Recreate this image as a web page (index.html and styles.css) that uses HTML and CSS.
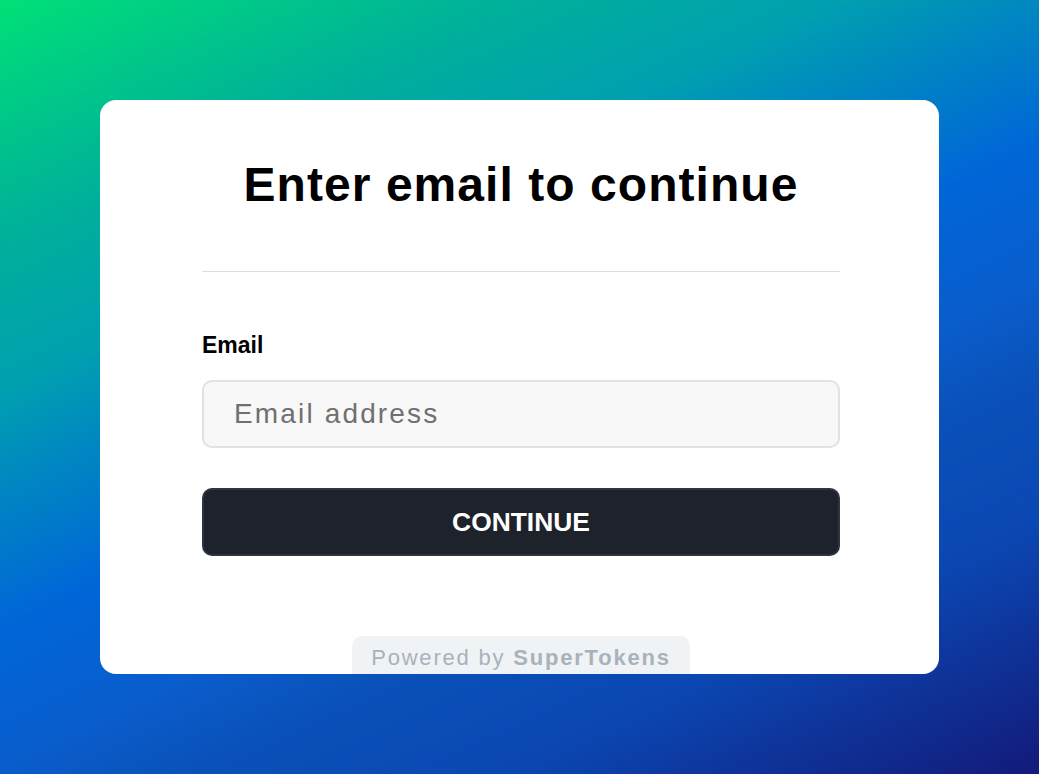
FILE: index.html
```html
<!DOCTYPE html>
<html lang="en">
<head>
<meta charset="utf-8">
<title>Enter email to continue</title>
<link rel="stylesheet" href="styles.css">
</head>
<body>
<div class="page">
  <div class="card">
    <h1 class="title">Enter email to continue</h1>
    <div class="divider"></div>
    <form class="form">
      <label class="label" for="email">Email</label>
      <input class="input" id="email" type="email" placeholder="Email address">
      <button class="button" type="button">CONTINUE</button>
    </form>
    <div class="powered">Powered by <b>SuperTokens</b></div>
  </div>
</div>
</body>
</html>
```

FILE: styles.css
```css
* { box-sizing: border-box; }
html, body { margin: 0; padding: 0; }
body {
  width: 1039px;
  height: 774px;
  overflow: hidden;
  font-family: "Liberation Sans", Arial, sans-serif;
  background: linear-gradient(155deg, #00e077 0%, #00b09a 19%, #00a0b0 31%, #0088c0 38.5%, #0066d8 50%, #0a5dcc 61%, #0a50b8 69%, #0b47b2 80%, #131a7a 100%);
}
.page {
  padding-top: 100px;
  display: flex;
  justify-content: center;
}
.card {
  width: 839px;
  height: 574px;
  background: #ffffff;
  border-radius: 16px;
  overflow: hidden;
  padding: 55px 99px 0 102px;
  display: flex;
  flex-direction: column;
  align-items: stretch;
}
.card > * { flex-shrink: 0; }
.title {
  margin: 0;
  font-size: 48px;
  line-height: 60px;
  font-weight: 700;
  letter-spacing: 1.05px;
  text-align: center;
  color: #000000;
}
.divider {
  margin-top: 56px;
  height: 1px;
  background: #dddddd;
}
.form {
  display: flex;
  flex-direction: column;
  margin-top: 59px;
}
.form > * { flex-shrink: 0; }
.label {
  font-size: 23px;
  line-height: 28px;
  font-weight: 700;
  color: #000000;
}
.input {
  margin-top: 21px;
  height: 68px;
  border: 2px solid #e2e2e2;
  border-radius: 10px;
  background: #f8f8f8;
  padding: 0 30px;
  font-family: "Liberation Sans", Arial, sans-serif;
  font-size: 28px;
  letter-spacing: 2.15px;
  color: #222222;
  outline: none;
}
.input::placeholder { color: #707070; }
.button {
  margin-top: 40px;
  height: 68px;
  border: 2px solid #2d3540;
  border-radius: 10px;
  background: #1e232b;
  color: #ffffff;
  font-family: "Liberation Sans", Arial, sans-serif;
  font-size: 26.4px;
  font-weight: 700;
  cursor: pointer;
}
.powered {
  align-self: center;
  margin-top: 80px;
  padding: 7px 19px 10px;
  background: #f0f3f5;
  border-radius: 10px;
  font-size: 22px;
  line-height: 30px;
  letter-spacing: 1.8px;
  color: #a8b2bb;
  white-space: nowrap;
}
.powered b { font-weight: 700; }
```
